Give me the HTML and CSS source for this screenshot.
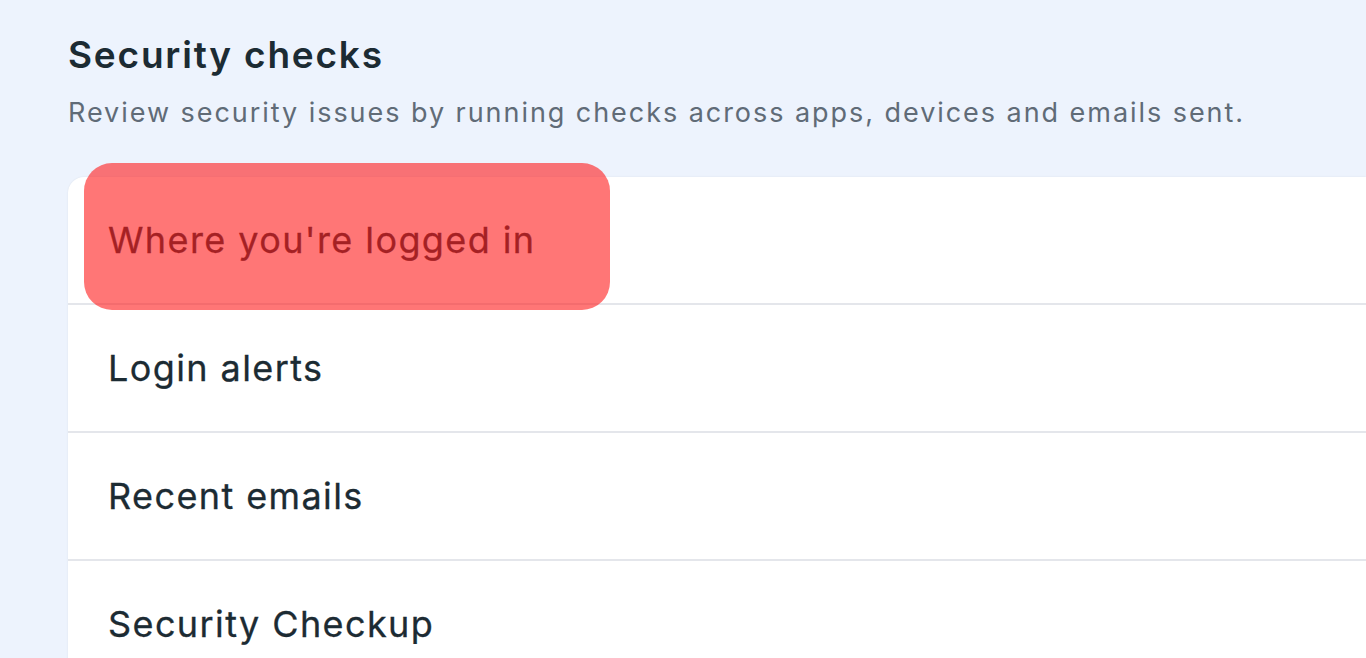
FILE: index.html
```html
<!DOCTYPE html>
<html lang="en">
  <head>
    <meta charset="UTF-8" />
    <meta name="viewport" content="width=device-width, initial-scale=1.0" />
    <title>Security checks</title>
    <link rel="stylesheet" href="styles.css">
  </head>
  <body>
    <div class="page">
      <h1 class="title">Security checks</h1>
      <p class="subtitle">Review security issues by running checks across apps, devices and emails sent.</p>
      <div class="card">
        <div class="highlight"></div>
        <a class="row" href="#">Where you're logged in</a>
        <a class="row" href="#">Login alerts</a>
        <a class="row" href="#">Recent emails</a>
        <a class="row" href="#">Security Checkup</a>
      </div>
    </div>
  </body>
</html>
```

FILE: styles.css
```css
body {
  margin: 0;
  background-color: #edf3fd;
  font-family: Inter, "Noto Sans", sans-serif;
  overflow: hidden;
}
.page {
  padding: 33px 0 0 68px;
}
.title {
  margin: 0;
  font-size: 37px;
  font-weight: 600;
  letter-spacing: 1.8px;
  line-height: 44px;
  color: #1c2b33;
}
.subtitle {
  margin: 18px 0 0;
  font-size: 27px;
  letter-spacing: 1.95px;
  line-height: 36px;
  color: #606b77;
}
.card {
  position: relative;
  margin-top: 46px;
  background-color: #fff;
  border-radius: 16px 0 0 0;
  box-shadow: 0 0 2px rgba(0, 0, 0, 0.08);
}
.row {
  display: flex;
  align-items: center;
  height: 126px;
  padding-left: 40px;
  border-bottom: 2px solid #e4e6eb;
  font-size: 36px;
  letter-spacing: 1.4px;
  color: #1c2b33;
  text-decoration: none;
  -webkit-text-stroke: 0.3px #1c2b33;
}
.highlight {
  position: absolute;
  left: 16px;
  top: -14px;
  width: 526px;
  height: 147px;
  border-radius: 28px;
  background-color: rgba(255, 27, 27, 0.6);
}
```
